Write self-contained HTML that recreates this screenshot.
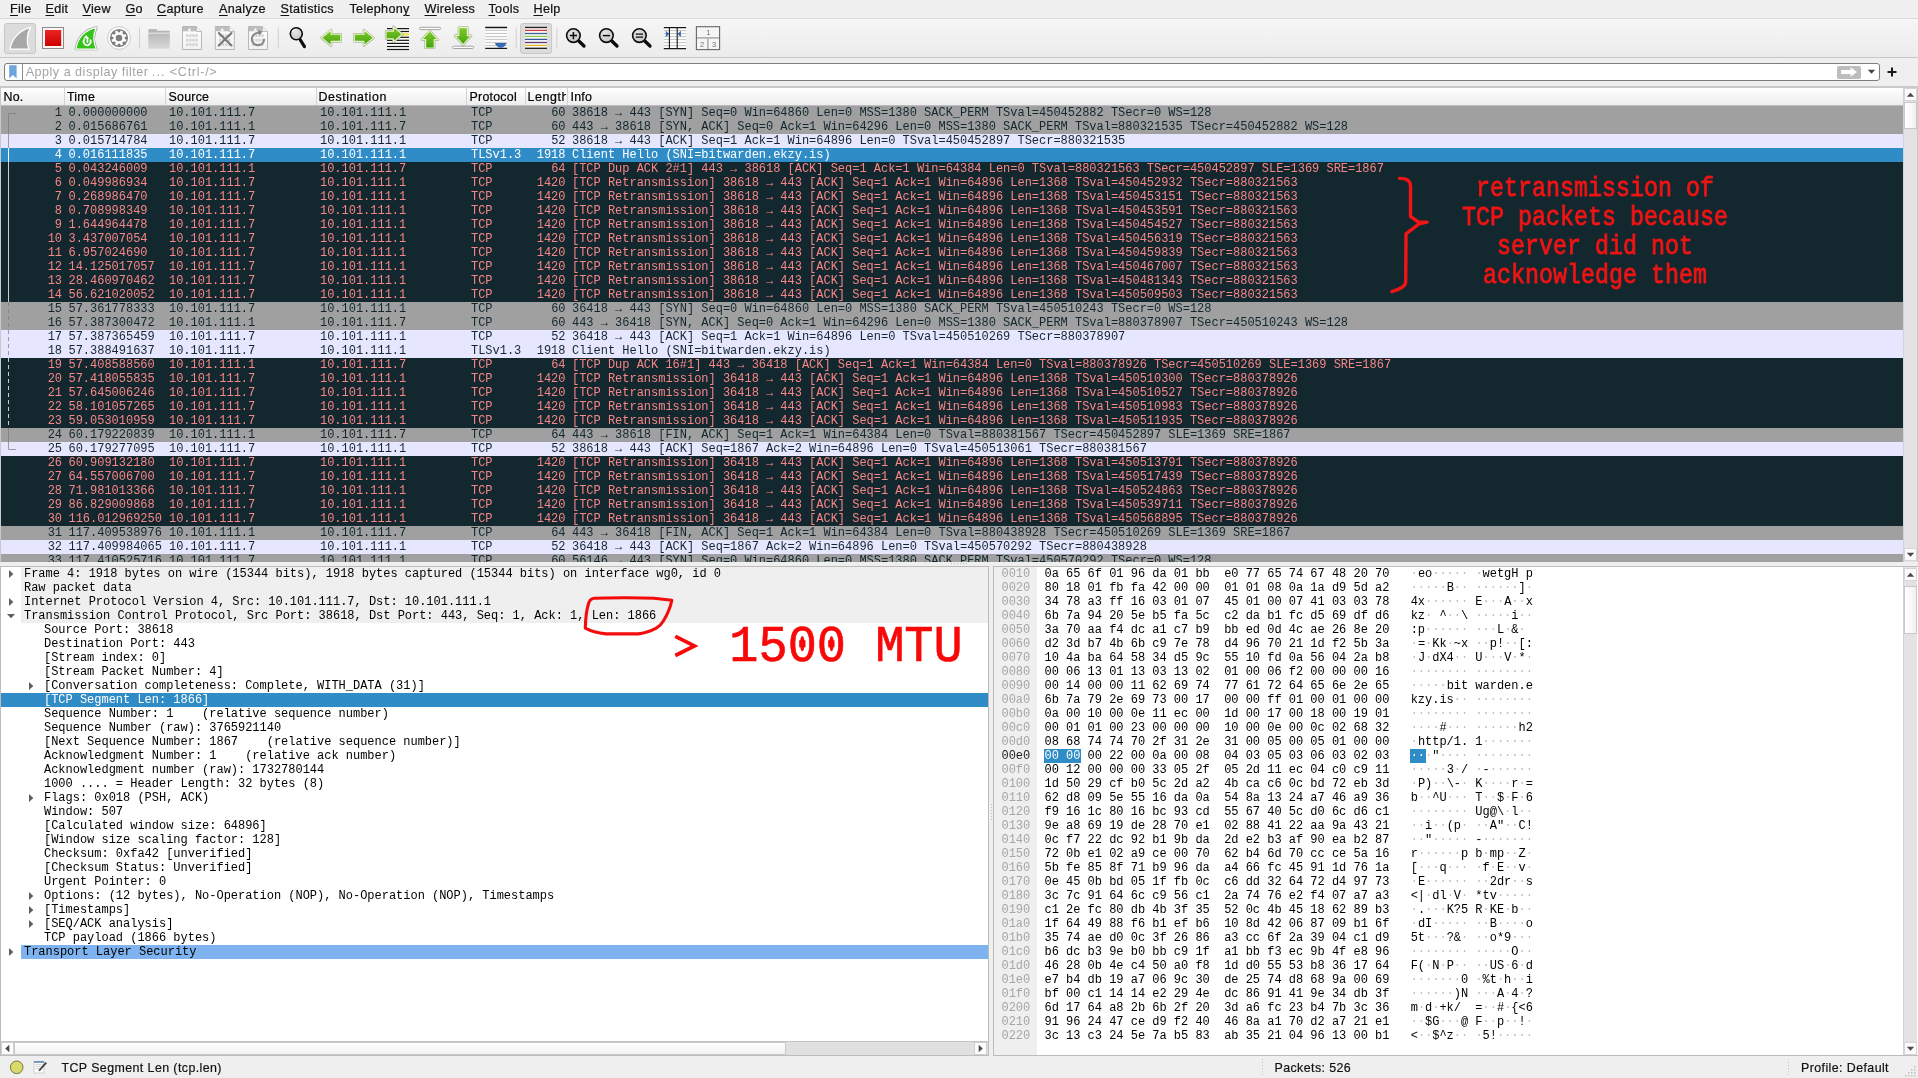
<!DOCTYPE html><html><head><meta charset="utf-8"><title>Wireshark</title><style>
html,body{margin:0;padding:0}
body{width:1918px;height:1078px;position:relative;overflow:hidden;background:#efefef;font-family:"Liberation Sans",sans-serif;font-size:12px;color:#000}
.a{position:absolute}
.m{-webkit-text-stroke:.22px #111;position:absolute;top:1px;height:18px;line-height:17px;font-size:12.6px;color:#111;white-space:pre}
.m u{text-decoration-thickness:1.2px;text-underline-offset:1.8px}
.mono{font-family:"Liberation Mono",monospace;font-size:12px;line-height:14px;white-space:pre;letter-spacing:-.016px}
.r{position:absolute;left:1px;width:1902px;height:14px;overflow:hidden}
.r i{position:absolute;top:0;font-style:normal}
.g{background:#a0a0a0;color:#12272e}
.l{background:#e7e6ff;color:#12272e}
.d{background:#12272e;color:#f78787}
.s{background:#308cc6;color:#fff}
.h{-webkit-text-stroke:.2px #000;position:absolute;top:88px;height:17px;line-height:19px;font-size:12.4px;white-space:pre;letter-spacing:.25px;overflow:hidden}
.hs{position:absolute;top:88px;height:17px;width:1px;background:#d4d4d4}
.t{position:absolute;height:14px}
.t b{font-weight:normal;color:#bcbcbc}
.sb{position:absolute;background:#e3e3e3;border-left:1px solid #d2d2d2;box-sizing:border-box}
.btn{position:absolute;background:#fcfcfc;border:1px solid #c8c8c8;box-sizing:border-box}
.ann{position:absolute;color:#f21212;font-family:"Liberation Mono",monospace;white-space:pre}
</style></head><body><div id="root" style="position:absolute;left:0;top:0;width:1918px;height:1078px;will-change:transform;transform:translateZ(0)"><div class="a" style="left:0;top:0;width:1918px;height:18px;background:#f0f0f0"></div><span class="m" id="m_File" style="left:10px;letter-spacing:0.3px"><u>F</u>ile</span><span class="m" id="m_Edit" style="left:45.5px;letter-spacing:0.3px"><u>E</u>dit</span><span class="m" id="m_View" style="left:82.5px;letter-spacing:0.3px"><u>V</u>iew</span><span class="m" id="m_Go" style="left:125.5px;letter-spacing:0.3px"><u>G</u>o</span><span class="m" id="m_Capture" style="left:157px;letter-spacing:0.3px"><u>C</u>apture</span><span class="m" id="m_Analyze" style="left:219px;letter-spacing:0.3px"><u>A</u>nalyze</span><span class="m" id="m_Statistics" style="left:280.5px;letter-spacing:0.3px"><u>S</u>tatistics</span><span class="m" id="m_Telephony" style="left:349.5px;letter-spacing:0.3px">Telephon<u>y</u></span><span class="m" id="m_Wireless" style="left:424.5px;letter-spacing:0.3px"><u>W</u>ireless</span><span class="m" id="m_Tools" style="left:488.5px;letter-spacing:0.3px"><u>T</u>ools</span><span class="m" id="m_Help" style="left:533.5px;letter-spacing:0.3px"><u>H</u>elp</span><div class="a" style="left:0;top:18px;width:1918px;height:40px;background:linear-gradient(#f6f6f6,#ececec);border-top:1px solid #d9d9d9;border-bottom:1px solid #c6c6c6;box-sizing:border-box"></div><svg class="a" style="left:0;top:0" width="740" height="60" viewBox="0 0 740 60"><defs><linearGradient id="gg" x1="0" y1="0" x2="0" y2="1"><stop offset="0" stop-color="#7fcc2c"/><stop offset="1" stop-color="#46a010"/></linearGradient><linearGradient id="rg" x1="0" y1="0" x2="0" y2="1"><stop offset="0" stop-color="#e82525"/><stop offset="1" stop-color="#cf0000"/></linearGradient><linearGradient id="fg" x1="0" y1="0" x2="0" y2="1"><stop offset="0" stop-color="#b4b4b4"/><stop offset="1" stop-color="#d9d9d9"/></linearGradient><linearGradient id="pg" x1="0" y1="0" x2="0" y2="1"><stop offset="0" stop-color="#ffffff"/><stop offset="1" stop-color="#f1f1f1"/></linearGradient><radialGradient id="mg" cx=".4" cy=".35" r=".7"><stop offset="0" stop-color="#e6e6e6"/><stop offset="1" stop-color="#c2c2c2"/></radialGradient></defs><rect x="4.5" y="23.5" width="31" height="30" rx="2.500" fill="#dcdcdc" stroke="#c6c6c6"/><path d="M10 49.100C11.5 39.500 18.5 30.600 30.4 27.400C27.2 33.800 26.2 41.500 28.9 49.100Z" fill="#a8a8a8" stroke="#fff" stroke-width="1.300" stroke-linejoin="round"/><rect x="42.500" y="27.500" width="21" height="21" fill="#fff4f2" stroke="#8c8c8c"/><rect x="45" y="30" width="16.200" height="16" fill="url(#rg)"/><path d="M75.900 49.100C77.400 38.500 84.300 29.800 96.300 27.600C93.400 33.800 92.600 41.500 96.400 49.100Z" fill="none" stroke="#9c9c9c" stroke-width="2.500" stroke-linejoin="round"/><path d="M75.900 49.100C77.400 38.500 84.300 29.800 96.300 27.600C93.400 33.800 92.600 41.500 96.400 49.100Z" fill="#32c418" stroke="#fff" stroke-width="1.200" stroke-linejoin="round"/><path d="M84.600 39.200A3.500 3.500 0 1 0 90 39.600" fill="none" stroke="#fff" stroke-width="1.700"/><path d="M87.400 42.800V38" stroke="#fff" stroke-width="1.700"/><path d="M83.300 38.300L86.200 35 89.300 38.800z" fill="#fff"/><circle cx="119" cy="38" r="11.400" fill="#fff" stroke="#c4c4c4" stroke-width=".9"/><circle cx="119" cy="38" r="9.100" fill="#7e7e7e"/><g fill="#fff"><circle cx="119" cy="38" r="5.700"/><rect x="117.700" y="30.400" width="2.600" height="3" transform="rotate(22.5 119 38)"/><rect x="117.700" y="30.400" width="2.600" height="3" transform="rotate(67.5 119 38)"/><rect x="117.700" y="30.400" width="2.600" height="3" transform="rotate(112.5 119 38)"/><rect x="117.700" y="30.400" width="2.600" height="3" transform="rotate(157.5 119 38)"/><rect x="117.700" y="30.400" width="2.600" height="3" transform="rotate(202.5 119 38)"/><rect x="117.700" y="30.400" width="2.600" height="3" transform="rotate(247.5 119 38)"/><rect x="117.700" y="30.400" width="2.600" height="3" transform="rotate(292.5 119 38)"/><rect x="117.700" y="30.400" width="2.600" height="3" transform="rotate(337.5 119 38)"/></g><circle cx="119" cy="38" r="3.300" fill="#7e7e7e"/><path d="M139.5 27.500V48.500" stroke="#d0d0d0" stroke-width="1"/><path d="M148.500 31V29.800Q148.500 29 149.300 29H156.500L157.500 31z" fill="#b9b9b9"/><rect x="148.300" y="30.800" width="21.500" height="18" rx=".8" fill="url(#fg)"/><path d="M148.300 33.200H169.800" stroke="#ededed" stroke-width="1"/><path d="M182.5 26.500H196.5L201.5 31.500V49.500H182.5z" fill="url(#pg)" stroke="#b7b7b7" stroke-width="1"/><path d="M183 27H196.3L196.3 31.300H183z" fill="#bdbdbd"/><path d="M187.5 31.300q.5-2.500 2.500-3.500l1 3.500z" fill="#f4f4f4"/><path d="M196.5 26.500V31.500H201.5" fill="#f4f4f4" stroke="#b7b7b7" stroke-width=".9"/><path d="M186.2 35.6H197.8" stroke="#cfcfcf" stroke-width="2.600" stroke-dasharray="2.100 1"/><path d="M186.2 40.1H197.8" stroke="#cfcfcf" stroke-width="2.600" stroke-dasharray="2.100 1"/><path d="M186.2 44.6H197.8" stroke="#cfcfcf" stroke-width="2.600" stroke-dasharray="2.100 1"/><path d="M215.3 26.500H229.3L234.3 31.500V49.500H215.3z" fill="url(#pg)" stroke="#b7b7b7" stroke-width="1"/><path d="M215.8 27H229.10000000000002L229.10000000000002 31.300H215.8z" fill="#bdbdbd"/><path d="M220.3 31.300q.5-2.500 2.500-3.500l1 3.500z" fill="#f4f4f4"/><path d="M229.3 26.500V31.500H234.3" fill="#f4f4f4" stroke="#b7b7b7" stroke-width=".9"/><path d="M219.0 35.6H230.60000000000002" stroke="#cfcfcf" stroke-width="2.600" stroke-dasharray="2.100 1"/><path d="M219.0 40.1H230.60000000000002" stroke="#cfcfcf" stroke-width="2.600" stroke-dasharray="2.100 1"/><path d="M219.0 44.6H230.60000000000002" stroke="#cfcfcf" stroke-width="2.600" stroke-dasharray="2.100 1"/><path d="M218.800 33L231.500 45.500M231.500 33L218.800 45.500" stroke="#777" stroke-width="2.100" stroke-linecap="round"/><path d="M248.5 26.500H262.5L267.5 31.500V49.500H248.5z" fill="url(#pg)" stroke="#b7b7b7" stroke-width="1"/><path d="M249 27H262.3L262.3 31.300H249z" fill="#bdbdbd"/><path d="M253.5 31.300q.5-2.500 2.500-3.500l1 3.500z" fill="#f4f4f4"/><path d="M262.5 26.500V31.500H267.5" fill="#f4f4f4" stroke="#b7b7b7" stroke-width=".9"/><path d="M252.2 35.6H263.8" stroke="#cfcfcf" stroke-width="2.600" stroke-dasharray="2.100 1"/><path d="M252.2 40.1H263.8" stroke="#cfcfcf" stroke-width="2.600" stroke-dasharray="2.100 1"/><path d="M252.2 44.6H263.8" stroke="#cfcfcf" stroke-width="2.600" stroke-dasharray="2.100 1"/><path d="M260.300 33.300A6.200 6.200 0 1 0 264.200 38.800" fill="none" stroke="#858585" stroke-width="1.900"/><path d="M257.500 30.500L262.500 31.300 259.800 35.600z" fill="#858585"/><path d="M278.3 27.500V48.500" stroke="#d0d0d0" stroke-width="1"/><path d="M300.4 40L304.4 46.5" stroke="#0c0c0c" stroke-width="3.300" stroke-linecap="round"/><circle cx="296.3" cy="33.7" r="6" fill="url(#mg)" stroke="#0c0c0c" stroke-width="1.600"/><path d="M292.300 31.500A4.500 4.500 0 0 1 296 29.300" fill="none" stroke="#fff" stroke-width="1.100" stroke-linecap="round"/><path d="M321.500 37.800L331.200 30V34.200H340.800V41.400H331.200V45.600z" fill="none" stroke="#93a183" stroke-width="2.200" stroke-linejoin="round"/><path d="M321.500 37.800L331.200 30V34.200H340.800V41.400H331.200V45.600z" fill="url(#gg)" stroke="#e6f6c4" stroke-width="1.200" stroke-linejoin="round"/><path d="M373.600 37.800L363.900 30V34.200H354.300V41.400H363.900V45.600z" fill="none" stroke="#93a183" stroke-width="2.200" stroke-linejoin="round"/><path d="M373.600 37.800L363.900 30V34.200H354.300V41.400H363.900V45.600z" fill="url(#gg)" stroke="#e6f6c4" stroke-width="1.200" stroke-linejoin="round"/><rect x="387" y="27.600" width="22" height="23" fill="#fff"/><path d="M387 28.6H409" stroke="#161616" stroke-width="1.250"/><path d="M387 31.5H409" stroke="#161616" stroke-width="1.250"/><path d="M387 37.3H409" stroke="#161616" stroke-width="1.250"/><path d="M387 40.3H409" stroke="#161616" stroke-width="1.250"/><path d="M387 43.4H409" stroke="#161616" stroke-width="1.250"/><path d="M387 46.5H409" stroke="#161616" stroke-width="1.250"/><path d="M387 49.5H409" stroke="#161616" stroke-width="1.250"/><rect x="401" y="33.200" width="8" height="2.400" fill="#f2e24a"/><path d="M402.300 34.300L393.400 26.700V31.200H386V38.800H393.400V42z" fill="none" stroke="#93a183" stroke-width="2.200" stroke-linejoin="round"/><path d="M402.300 34.300L393.400 26.700V31.200H386V38.800H393.400V42z" fill="url(#gg)" stroke="#e6f6c4" stroke-width="1.200" stroke-linejoin="round"/><rect x="419.400" y="27.300" width="21.100" height="2.300" rx="1.150" fill="#fff" stroke="#8d8d8d" stroke-width=".8"/><path d="M429.900 30.900L438 39.700H434.200V48H425.600V39.700H421.800z" fill="none" stroke="#93a183" stroke-width="2.200" stroke-linejoin="round"/><path d="M429.900 30.900L438 39.700H434.200V48H425.600V39.700H421.800z" fill="url(#gg)" stroke="#e6f6c4" stroke-width="1.200" stroke-linejoin="round"/><path d="M463.100 44.800L471.200 35.700H467.400V27.700H458.800V35.700H455z" fill="none" stroke="#93a183" stroke-width="2.200" stroke-linejoin="round"/><path d="M463.100 44.800L471.200 35.700H467.400V27.700H458.800V35.700H455z" fill="url(#gg)" stroke="#e6f6c4" stroke-width="1.200" stroke-linejoin="round"/><rect x="452.500" y="46.200" width="21.100" height="2.300" rx="1.150" fill="#fff" stroke="#8d8d8d" stroke-width=".8"/><rect x="485.200" y="27" width="21.900" height="22" fill="#fff"/><path d="M485.200 30.4H507.100" stroke="#c9c9c9" stroke-width="1.200"/><path d="M485.200 33.5H507.100" stroke="#c9c9c9" stroke-width="1.200"/><path d="M485.200 36.6H507.100" stroke="#c9c9c9" stroke-width="1.200"/><path d="M485.200 39.5H507.100" stroke="#c9c9c9" stroke-width="1.200"/><path d="M485.200 42.5H507.100" stroke="#c9c9c9" stroke-width="1.200"/><path d="M485.200 45.6H507.100" stroke="#c9c9c9" stroke-width="1.200"/><path d="M485.200 27.500H507.100M485.200 48.400H507.100" stroke="#161616" stroke-width="1.300"/><path d="M494.800 43H506.600C505.600 45.600 503.600 47.800 500.700 47.800C497.800 47.800 495.800 45.600 494.800 43Z" fill="#3a69b4"/><path d="M516.2 27.500V48.500" stroke="#d0d0d0" stroke-width="1"/><rect x="520.6" y="23.5" width="31" height="30" rx="2.500" fill="#dcdcdc" stroke="#c6c6c6"/><rect x="525" y="27" width="22" height="22" fill="#fff"/><path d="M525 27.5H547" stroke="#222" stroke-width="1.350"/><path d="M525 30.4H547" stroke="#d83838" stroke-width="1.350"/><path d="M525 33.5H547" stroke="#3b5f97" stroke-width="1.350"/><path d="M525 36.4H547" stroke="#8cc544" stroke-width="1.350"/><path d="M525 39.4H547" stroke="#34559b" stroke-width="1.350"/><path d="M525 42.5H547" stroke="#5a3776" stroke-width="1.350"/><path d="M525 45.4H547" stroke="#e2b521" stroke-width="1.350"/><path d="M525 48.3H547" stroke="#222" stroke-width="1.350"/><path d="M556.9 27.500V48.500" stroke="#d0d0d0" stroke-width="1"/><path d="M578.8 41L584 46" stroke="#0c0c0c" stroke-width="3.300" stroke-linecap="round"/><circle cx="573.4" cy="35.6" r="6.8" fill="url(#mg)" stroke="#0c0c0c" stroke-width="1.600"/><path d="M569.8 35.6H577.0M573.4 32.0V39.2" stroke="#0c0c0c" stroke-width="1.500"/><path d="M611.8 41L617 46" stroke="#0c0c0c" stroke-width="3.300" stroke-linecap="round"/><circle cx="606.4" cy="35.6" r="6.8" fill="url(#mg)" stroke="#0c0c0c" stroke-width="1.600"/><path d="M602.8 35.6H610.0" stroke="#0c0c0c" stroke-width="1.500"/><path d="M644.8 41L650 46" stroke="#0c0c0c" stroke-width="3.300" stroke-linecap="round"/><circle cx="639.4" cy="35.6" r="6.8" fill="url(#mg)" stroke="#0c0c0c" stroke-width="1.600"/><path d="M635.8 34.1H643.0M635.8 37.1H643.0" stroke="#0c0c0c" stroke-width="1.400"/><rect x="663.800" y="27" width="22.300" height="22" fill="#fff"/><path d="M663.800 30.6H686.100" stroke="#c6c6c6" stroke-width="1.100"/><path d="M663.800 33.6H686.100" stroke="#c6c6c6" stroke-width="1.100"/><path d="M663.800 36.6H686.100" stroke="#c6c6c6" stroke-width="1.100"/><path d="M663.800 39.6H686.100" stroke="#c6c6c6" stroke-width="1.100"/><path d="M663.800 42.6H686.100" stroke="#c6c6c6" stroke-width="1.100"/><path d="M663.800 45.6H686.100" stroke="#c6c6c6" stroke-width="1.100"/><path d="M663.800 27.600H686.100M663.800 48.600H686.100" stroke="#161616" stroke-width="1.300"/><path d="M669.400 27.600V48.600M677.200 27.600V48.600" stroke="#161616" stroke-width="1.100"/><path d="M665.800 30.800V37L669.300 33.900zM680.900 30.800V37L677.400 33.900z" fill="#3a69b4"/><rect x="696.400" y="26.700" width="23.200" height="22.900" fill="#f5f5f5" stroke="#666" stroke-width="1.100"/><path d="M697 37.900H719" stroke="#a8a8a8" stroke-width="1.500"/><path d="M707.900 38.500V49" stroke="#a8a8a8" stroke-width="1.500"/><g font-family="Liberation Sans,sans-serif" font-size="7.500" fill="#6f6f6f" text-anchor="middle"><text x="708.300" y="35.300">1</text><text x="702.200" y="46.900">2</text><text x="714" y="46.900">3</text></g></svg><div class="a" style="left:0;top:58px;width:1918px;height:28px;background:#efefef"></div><div class="a" style="left:4px;top:63px;width:1876px;height:18px;box-sizing:border-box;border:1px solid #7d7d7d;border-radius:3px;background:#fff"></div><div class="a" style="left:22px;top:64px;width:1px;height:16px;background:#8a8a8a"></div><svg class="a" style="left:8px;top:64px" width="10" height="16" viewBox="0 0 10 16"><path d="M1.2 1.3h7.4v13.2l-3.7-3.4-3.7 3.4z" fill="#6da4dc"/></svg><span class="a" id="flt" style="left:25.7px;top:64px;height:18px;line-height:17px;font-size:12.6px;color:#a4a4a4;white-space:pre;letter-spacing:.49px">Apply a display filter</span><span class="a" style="left:151.7px;top:64px;height:18px;line-height:17px;font-size:12.6px;color:#a4a4a4;white-space:pre;letter-spacing:1.2px">...</span><span class="a" id="flt2" style="left:169.8px;top:64px;height:18px;line-height:17px;font-size:12.6px;color:#a4a4a4;white-space:pre;letter-spacing:.7px">&lt;Ctrl-/&gt;</span><div class="a" style="left:1837px;top:65.5px;width:24px;height:13px;background:#bdbdbd;border-radius:2px"></div><svg class="a" style="left:1837px;top:65px" width="24" height="14" viewBox="0 0 24 14"><path d="M4 5h9.5V2.2L20 7l-6.500 4.800V9H4z" fill="#fff"/></svg><svg class="a" style="left:1866px;top:68px" width="12" height="8" viewBox="0 0 12 8"><path d="M1.8 1.8h7.4L5.500 5.800z" fill="#444"/></svg><svg class="a" style="left:1886px;top:66px" width="12" height="12" viewBox="0 0 12 12"><path d="M5 1.500h2V5h3.500v2H7v3.500H5V7H1.500V5H5z" fill="#1a1a1a"/></svg><div class="a" style="left:0;top:86px;width:1918px;height:476px;background:#c9c9c9"></div><div class="a" style="left:1px;top:88px;width:1902px;height:18px;background:linear-gradient(#ffffff,#f3f3f3 60%,#ececec)"></div><span class="h" style="left:3.5px;width:61.0px">No.</span><span class="h" style="left:67px;width:98.5px">Time</span><span class="h" style="left:168.5px;width:147.5px">Source</span><span class="h" style="left:318.5px;width:148.0px;letter-spacing:.58px">Destination</span><span class="h" style="left:469.5px;width:55.5px">Protocol</span><span class="h" style="left:527.5px;width:38.5px;letter-spacing:.58px">Length</span><span class="h" style="left:570.5px;width:1332.5px">Info</span><div class="hs" style="left:64px"></div><div class="hs" style="left:165px"></div><div class="hs" style="left:316px"></div><div class="hs" style="left:466px"></div><div class="hs" style="left:524.5px"></div><div class="hs" style="left:567px"></div><div class="a" style="left:1px;top:105px;width:1902px;height:1px;background:#bcbcbc"></div><div class="a mono" style="left:0;top:0;width:1903px;height:561.5px;overflow:hidden"><div class="r g" style="top:106px"><i style="right:1841px">1</i><i style="left:67.5px">0.000000000</i><i style="left:168px">10.101.111.7</i><i style="left:319px">10.101.111.1</i><i style="left:470px">TCP</i><i style="right:1337.5px">60</i><i style="left:571px">38618 → 443 [SYN] Seq=0 Win=64860 Len=0 MSS=1380 SACK_PERM TSval=450452882 TSecr=0 WS=128</i></div><div class="r g" style="top:120px"><i style="right:1841px">2</i><i style="left:67.5px">0.015686761</i><i style="left:168px">10.101.111.1</i><i style="left:319px">10.101.111.7</i><i style="left:470px">TCP</i><i style="right:1337.5px">60</i><i style="left:571px">443 → 38618 [SYN, ACK] Seq=0 Ack=1 Win=64296 Len=0 MSS=1380 SACK_PERM TSval=880321535 TSecr=450452882 WS=128</i></div><div class="r l" style="top:134px"><i style="right:1841px">3</i><i style="left:67.5px">0.015714784</i><i style="left:168px">10.101.111.7</i><i style="left:319px">10.101.111.1</i><i style="left:470px">TCP</i><i style="right:1337.5px">52</i><i style="left:571px">38618 → 443 [ACK] Seq=1 Ack=1 Win=64896 Len=0 TSval=450452897 TSecr=880321535</i></div><div class="r s" style="top:148px"><i style="right:1841px">4</i><i style="left:67.5px">0.016111835</i><i style="left:168px">10.101.111.7</i><i style="left:319px">10.101.111.1</i><i style="left:470px">TLSv1.3</i><i style="right:1337.5px">1918</i><i style="left:571px">Client Hello (SNI=bitwarden.ekzy.is)</i></div><div class="r d" style="top:162px"><i style="right:1841px">5</i><i style="left:67.5px">0.043246009</i><i style="left:168px">10.101.111.1</i><i style="left:319px">10.101.111.7</i><i style="left:470px">TCP</i><i style="right:1337.5px">64</i><i style="left:571px">[TCP Dup ACK 2#1] 443 → 38618 [ACK] Seq=1 Ack=1 Win=64384 Len=0 TSval=880321563 TSecr=450452897 SLE=1369 SRE=1867</i></div><div class="r d" style="top:176px"><i style="right:1841px">6</i><i style="left:67.5px">0.049986934</i><i style="left:168px">10.101.111.7</i><i style="left:319px">10.101.111.1</i><i style="left:470px">TCP</i><i style="right:1337.5px">1420</i><i style="left:571px">[TCP Retransmission] 38618 → 443 [ACK] Seq=1 Ack=1 Win=64896 Len=1368 TSval=450452932 TSecr=880321563</i></div><div class="r d" style="top:190px"><i style="right:1841px">7</i><i style="left:67.5px">0.268986470</i><i style="left:168px">10.101.111.7</i><i style="left:319px">10.101.111.1</i><i style="left:470px">TCP</i><i style="right:1337.5px">1420</i><i style="left:571px">[TCP Retransmission] 38618 → 443 [ACK] Seq=1 Ack=1 Win=64896 Len=1368 TSval=450453151 TSecr=880321563</i></div><div class="r d" style="top:204px"><i style="right:1841px">8</i><i style="left:67.5px">0.708998349</i><i style="left:168px">10.101.111.7</i><i style="left:319px">10.101.111.1</i><i style="left:470px">TCP</i><i style="right:1337.5px">1420</i><i style="left:571px">[TCP Retransmission] 38618 → 443 [ACK] Seq=1 Ack=1 Win=64896 Len=1368 TSval=450453591 TSecr=880321563</i></div><div class="r d" style="top:218px"><i style="right:1841px">9</i><i style="left:67.5px">1.644964478</i><i style="left:168px">10.101.111.7</i><i style="left:319px">10.101.111.1</i><i style="left:470px">TCP</i><i style="right:1337.5px">1420</i><i style="left:571px">[TCP Retransmission] 38618 → 443 [ACK] Seq=1 Ack=1 Win=64896 Len=1368 TSval=450454527 TSecr=880321563</i></div><div class="r d" style="top:232px"><i style="right:1841px">10</i><i style="left:67.5px">3.437007054</i><i style="left:168px">10.101.111.7</i><i style="left:319px">10.101.111.1</i><i style="left:470px">TCP</i><i style="right:1337.5px">1420</i><i style="left:571px">[TCP Retransmission] 38618 → 443 [ACK] Seq=1 Ack=1 Win=64896 Len=1368 TSval=450456319 TSecr=880321563</i></div><div class="r d" style="top:246px"><i style="right:1841px">11</i><i style="left:67.5px">6.957024690</i><i style="left:168px">10.101.111.7</i><i style="left:319px">10.101.111.1</i><i style="left:470px">TCP</i><i style="right:1337.5px">1420</i><i style="left:571px">[TCP Retransmission] 38618 → 443 [ACK] Seq=1 Ack=1 Win=64896 Len=1368 TSval=450459839 TSecr=880321563</i></div><div class="r d" style="top:260px"><i style="right:1841px">12</i><i style="left:67.5px">14.125017057</i><i style="left:168px">10.101.111.7</i><i style="left:319px">10.101.111.1</i><i style="left:470px">TCP</i><i style="right:1337.5px">1420</i><i style="left:571px">[TCP Retransmission] 38618 → 443 [ACK] Seq=1 Ack=1 Win=64896 Len=1368 TSval=450467007 TSecr=880321563</i></div><div class="r d" style="top:274px"><i style="right:1841px">13</i><i style="left:67.5px">28.460970462</i><i style="left:168px">10.101.111.7</i><i style="left:319px">10.101.111.1</i><i style="left:470px">TCP</i><i style="right:1337.5px">1420</i><i style="left:571px">[TCP Retransmission] 38618 → 443 [ACK] Seq=1 Ack=1 Win=64896 Len=1368 TSval=450481343 TSecr=880321563</i></div><div class="r d" style="top:288px"><i style="right:1841px">14</i><i style="left:67.5px">56.621020052</i><i style="left:168px">10.101.111.7</i><i style="left:319px">10.101.111.1</i><i style="left:470px">TCP</i><i style="right:1337.5px">1420</i><i style="left:571px">[TCP Retransmission] 38618 → 443 [ACK] Seq=1 Ack=1 Win=64896 Len=1368 TSval=450509503 TSecr=880321563</i></div><div class="r g" style="top:302px"><i style="right:1841px">15</i><i style="left:67.5px">57.361778333</i><i style="left:168px">10.101.111.7</i><i style="left:319px">10.101.111.1</i><i style="left:470px">TCP</i><i style="right:1337.5px">60</i><i style="left:571px">36418 → 443 [SYN] Seq=0 Win=64860 Len=0 MSS=1380 SACK_PERM TSval=450510243 TSecr=0 WS=128</i></div><div class="r g" style="top:316px"><i style="right:1841px">16</i><i style="left:67.5px">57.387300472</i><i style="left:168px">10.101.111.1</i><i style="left:319px">10.101.111.7</i><i style="left:470px">TCP</i><i style="right:1337.5px">60</i><i style="left:571px">443 → 36418 [SYN, ACK] Seq=0 Ack=1 Win=64296 Len=0 MSS=1380 SACK_PERM TSval=880378907 TSecr=450510243 WS=128</i></div><div class="r l" style="top:330px"><i style="right:1841px">17</i><i style="left:67.5px">57.387365459</i><i style="left:168px">10.101.111.7</i><i style="left:319px">10.101.111.1</i><i style="left:470px">TCP</i><i style="right:1337.5px">52</i><i style="left:571px">36418 → 443 [ACK] Seq=1 Ack=1 Win=64896 Len=0 TSval=450510269 TSecr=880378907</i></div><div class="r l" style="top:344px"><i style="right:1841px">18</i><i style="left:67.5px">57.388491637</i><i style="left:168px">10.101.111.7</i><i style="left:319px">10.101.111.1</i><i style="left:470px">TLSv1.3</i><i style="right:1337.5px">1918</i><i style="left:571px">Client Hello (SNI=bitwarden.ekzy.is)</i></div><div class="r d" style="top:358px"><i style="right:1841px">19</i><i style="left:67.5px">57.408588560</i><i style="left:168px">10.101.111.1</i><i style="left:319px">10.101.111.7</i><i style="left:470px">TCP</i><i style="right:1337.5px">64</i><i style="left:571px">[TCP Dup ACK 16#1] 443 → 36418 [ACK] Seq=1 Ack=1 Win=64384 Len=0 TSval=880378926 TSecr=450510269 SLE=1369 SRE=1867</i></div><div class="r d" style="top:372px"><i style="right:1841px">20</i><i style="left:67.5px">57.418055835</i><i style="left:168px">10.101.111.7</i><i style="left:319px">10.101.111.1</i><i style="left:470px">TCP</i><i style="right:1337.5px">1420</i><i style="left:571px">[TCP Retransmission] 36418 → 443 [ACK] Seq=1 Ack=1 Win=64896 Len=1368 TSval=450510300 TSecr=880378926</i></div><div class="r d" style="top:386px"><i style="right:1841px">21</i><i style="left:67.5px">57.645006246</i><i style="left:168px">10.101.111.7</i><i style="left:319px">10.101.111.1</i><i style="left:470px">TCP</i><i style="right:1337.5px">1420</i><i style="left:571px">[TCP Retransmission] 36418 → 443 [ACK] Seq=1 Ack=1 Win=64896 Len=1368 TSval=450510527 TSecr=880378926</i></div><div class="r d" style="top:400px"><i style="right:1841px">22</i><i style="left:67.5px">58.101057265</i><i style="left:168px">10.101.111.7</i><i style="left:319px">10.101.111.1</i><i style="left:470px">TCP</i><i style="right:1337.5px">1420</i><i style="left:571px">[TCP Retransmission] 36418 → 443 [ACK] Seq=1 Ack=1 Win=64896 Len=1368 TSval=450510983 TSecr=880378926</i></div><div class="r d" style="top:414px"><i style="right:1841px">23</i><i style="left:67.5px">59.053010959</i><i style="left:168px">10.101.111.7</i><i style="left:319px">10.101.111.1</i><i style="left:470px">TCP</i><i style="right:1337.5px">1420</i><i style="left:571px">[TCP Retransmission] 36418 → 443 [ACK] Seq=1 Ack=1 Win=64896 Len=1368 TSval=450511935 TSecr=880378926</i></div><div class="r g" style="top:428px"><i style="right:1841px">24</i><i style="left:67.5px">60.179220839</i><i style="left:168px">10.101.111.1</i><i style="left:319px">10.101.111.7</i><i style="left:470px">TCP</i><i style="right:1337.5px">64</i><i style="left:571px">443 → 38618 [FIN, ACK] Seq=1 Ack=1 Win=64384 Len=0 TSval=880381567 TSecr=450452897 SLE=1369 SRE=1867</i></div><div class="r l" style="top:442px"><i style="right:1841px">25</i><i style="left:67.5px">60.179277095</i><i style="left:168px">10.101.111.7</i><i style="left:319px">10.101.111.1</i><i style="left:470px">TCP</i><i style="right:1337.5px">52</i><i style="left:571px">38618 → 443 [ACK] Seq=1867 Ack=2 Win=64896 Len=0 TSval=450513061 TSecr=880381567</i></div><div class="r d" style="top:456px"><i style="right:1841px">26</i><i style="left:67.5px">60.909132180</i><i style="left:168px">10.101.111.7</i><i style="left:319px">10.101.111.1</i><i style="left:470px">TCP</i><i style="right:1337.5px">1420</i><i style="left:571px">[TCP Retransmission] 36418 → 443 [ACK] Seq=1 Ack=1 Win=64896 Len=1368 TSval=450513791 TSecr=880378926</i></div><div class="r d" style="top:470px"><i style="right:1841px">27</i><i style="left:67.5px">64.557006700</i><i style="left:168px">10.101.111.7</i><i style="left:319px">10.101.111.1</i><i style="left:470px">TCP</i><i style="right:1337.5px">1420</i><i style="left:571px">[TCP Retransmission] 36418 → 443 [ACK] Seq=1 Ack=1 Win=64896 Len=1368 TSval=450517439 TSecr=880378926</i></div><div class="r d" style="top:484px"><i style="right:1841px">28</i><i style="left:67.5px">71.981013366</i><i style="left:168px">10.101.111.7</i><i style="left:319px">10.101.111.1</i><i style="left:470px">TCP</i><i style="right:1337.5px">1420</i><i style="left:571px">[TCP Retransmission] 36418 → 443 [ACK] Seq=1 Ack=1 Win=64896 Len=1368 TSval=450524863 TSecr=880378926</i></div><div class="r d" style="top:498px"><i style="right:1841px">29</i><i style="left:67.5px">86.829009868</i><i style="left:168px">10.101.111.7</i><i style="left:319px">10.101.111.1</i><i style="left:470px">TCP</i><i style="right:1337.5px">1420</i><i style="left:571px">[TCP Retransmission] 36418 → 443 [ACK] Seq=1 Ack=1 Win=64896 Len=1368 TSval=450539711 TSecr=880378926</i></div><div class="r d" style="top:512px"><i style="right:1841px">30</i><i style="left:67.5px">116.012969250</i><i style="left:168px">10.101.111.7</i><i style="left:319px">10.101.111.1</i><i style="left:470px">TCP</i><i style="right:1337.5px">1420</i><i style="left:571px">[TCP Retransmission] 36418 → 443 [ACK] Seq=1 Ack=1 Win=64896 Len=1368 TSval=450568895 TSecr=880378926</i></div><div class="r g" style="top:526px"><i style="right:1841px">31</i><i style="left:67.5px">117.409538976</i><i style="left:168px">10.101.111.1</i><i style="left:319px">10.101.111.7</i><i style="left:470px">TCP</i><i style="right:1337.5px">64</i><i style="left:571px">443 → 36418 [FIN, ACK] Seq=1 Ack=1 Win=64384 Len=0 TSval=880438928 TSecr=450510269 SLE=1369 SRE=1867</i></div><div class="r l" style="top:540px"><i style="right:1841px">32</i><i style="left:67.5px">117.409984065</i><i style="left:168px">10.101.111.7</i><i style="left:319px">10.101.111.1</i><i style="left:470px">TCP</i><i style="right:1337.5px">52</i><i style="left:571px">36418 → 443 [ACK] Seq=1867 Ack=2 Win=64896 Len=0 TSval=450570292 TSecr=880438928</i></div><div class="r g" style="top:554px"><i style="right:1841px">33</i><i style="left:67.5px">117.410525716</i><i style="left:168px">10.101.111.7</i><i style="left:319px">10.101.111.1</i><i style="left:470px">TCP</i><i style="right:1337.5px">60</i><i style="left:571px">56146 → 443 [SYN] Seq=0 Win=64860 Len=0 MSS=1380 SACK_PERM TSval=450570292 TSecr=0 WS=128</i></div></div><svg class="a" style="left:0;top:0" width="20" height="562" viewBox="0 0 20 562"><path d="M8.5 120V113.5H16" stroke="#82878a" fill="none"/><path d="M8.5 120V134" stroke="#82878a" fill="none"/><path d="M8.5 134V148" stroke="#9a9ba8" fill="none"/><path d="M8.5 148V162" stroke="#ffffff" fill="none"/><path d="M8.5 162V176" stroke="#cfcbd3" fill="none"/><path d="M8.5 176V190" stroke="#cfcbd3" fill="none"/><path d="M8.5 190V204" stroke="#cfcbd3" fill="none"/><path d="M8.5 204V218" stroke="#cfcbd3" fill="none"/><path d="M8.5 218V232" stroke="#cfcbd3" fill="none"/><path d="M8.5 232V246" stroke="#cfcbd3" fill="none"/><path d="M8.5 246V260" stroke="#cfcbd3" fill="none"/><path d="M8.5 260V274" stroke="#cfcbd3" fill="none"/><path d="M8.5 274V288" stroke="#cfcbd3" fill="none"/><path d="M8.5 288V302" stroke="#cfcbd3" fill="none"/><path d="M8.5 302V316" stroke="#82878a" stroke-dasharray="4 3" stroke-dashoffset="0" fill="none"/><path d="M8.5 316V330" stroke="#82878a" stroke-dasharray="4 3" stroke-dashoffset="0" fill="none"/><path d="M8.5 330V344" stroke="#9a9ba8" stroke-dasharray="4 3" stroke-dashoffset="0" fill="none"/><path d="M8.5 344V358" stroke="#9a9ba8" stroke-dasharray="4 3" stroke-dashoffset="0" fill="none"/><path d="M8.5 358V372" stroke="#cfcbd3" stroke-dasharray="4 3" stroke-dashoffset="0" fill="none"/><path d="M8.5 372V386" stroke="#cfcbd3" stroke-dasharray="4 3" stroke-dashoffset="0" fill="none"/><path d="M8.5 386V400" stroke="#cfcbd3" stroke-dasharray="4 3" stroke-dashoffset="0" fill="none"/><path d="M8.5 400V414" stroke="#cfcbd3" stroke-dasharray="4 3" stroke-dashoffset="0" fill="none"/><path d="M8.5 414V428" stroke="#cfcbd3" stroke-dasharray="4 3" stroke-dashoffset="0" fill="none"/><path d="M8.5 428V442" stroke="#82878a" fill="none"/><path d="M8.5 442V449.5H16" stroke="#9a9ba8" fill="none"/></svg><div class="sb" style="left:1903px;top:88px;width:14px;height:473.5px"></div><div class="btn" style="left:1904px;top:88px;width:13px;height:13px;border-color:#d6d6d6"></div><svg class="a" style="left:1904px;top:88px" width="13" height="13"><path d="M2.800 8.800L6.500 4.700 10.200 8.800z" fill="#4a4a4a"/></svg><div class="btn" style="left:1904px;top:101.500px;width:13px;height:27px;background:linear-gradient(90deg,#fff,#f1f1f1)"></div><div class="btn" style="left:1904px;top:548px;width:13px;height:13px;border-color:#d6d6d6"></div><svg class="a" style="left:1904px;top:548px" width="13" height="13"><path d="M2.800 4.700L6.500 8.800 10.200 4.700z" fill="#4a4a4a"/></svg><div class="a" style="left:0;top:561.5px;width:1918px;height:5px;background:#efefef"></div><div class="a" style="left:951px;top:563px;width:18px;height:1px;background:repeating-linear-gradient(90deg,#bdbdbd 0 1px,transparent 1px 3px)"></div><div class="a" style="left:0;top:566px;width:989px;height:490px;box-sizing:border-box;border:1px solid #bcbcbc;background:#fff"></div><div class="a mono" style="left:1px;top:567px;width:987px;height:474px;overflow:hidden"><div class="t" style="left:20px;top:0px;width:968px;background:#efefef"></div><span class="t" style="left:23px;top:0px;color:#000">Frame 4: 1918 bytes on wire (15344 bits), 1918 bytes captured (15344 bits) on interface wg0, id 0</span><svg class="a" style="left:6px;top:2px" width="8" height="10"><path d="M2 1L6.300 5 2 9z" fill="#5e5e5e"/></svg><div class="t" style="left:20px;top:14px;width:968px;background:#efefef"></div><span class="t" style="left:23px;top:14px;color:#000">Raw packet data</span><div class="t" style="left:20px;top:28px;width:968px;background:#efefef"></div><span class="t" style="left:23px;top:28px;color:#000">Internet Protocol Version 4, Src: 10.101.111.7, Dst: 10.101.111.1</span><svg class="a" style="left:6px;top:30px" width="8" height="10"><path d="M2 1L6.300 5 2 9z" fill="#5e5e5e"/></svg><div class="t" style="left:20px;top:42px;width:968px;background:#efefef"></div><span class="t" style="left:23px;top:42px;color:#000">Transmission Control Protocol, Src Port: 38618, Dst Port: 443, Seq: 1, Ack: 1, Len: 1866</span><svg class="a" style="left:5px;top:45px" width="10" height="8"><path d="M1 2H9L5 6.300z" fill="#5e5e5e"/></svg><span class="t" style="left:43px;top:56px;color:#000">Source Port: 38618</span><span class="t" style="left:43px;top:70px;color:#000">Destination Port: 443</span><span class="t" style="left:43px;top:84px;color:#000">[Stream index: 0]</span><span class="t" style="left:43px;top:98px;color:#000">[Stream Packet Number: 4]</span><span class="t" style="left:43px;top:112px;color:#000">[Conversation completeness: Complete, WITH_DATA (31)]</span><svg class="a" style="left:25.5px;top:114px" width="8" height="10"><path d="M2 1L6.300 5 2 9z" fill="#5e5e5e"/></svg><div class="t" style="left:0;top:126px;width:988px;background:#308cc6"></div><span class="t" style="left:43px;top:126px;color:#fff">[TCP Segment Len: 1866]</span><span class="t" style="left:43px;top:140px;color:#000">Sequence Number: 1    (relative sequence number)</span><span class="t" style="left:43px;top:154px;color:#000">Sequence Number (raw): 3765921140</span><span class="t" style="left:43px;top:168px;color:#000">[Next Sequence Number: 1867    (relative sequence number)]</span><span class="t" style="left:43px;top:182px;color:#000">Acknowledgment Number: 1    (relative ack number)</span><span class="t" style="left:43px;top:196px;color:#000">Acknowledgment number (raw): 1732780144</span><span class="t" style="left:43px;top:210px;color:#000">1000 .... = Header Length: 32 bytes (8)</span><span class="t" style="left:43px;top:224px;color:#000">Flags: 0x018 (PSH, ACK)</span><svg class="a" style="left:25.5px;top:226px" width="8" height="10"><path d="M2 1L6.300 5 2 9z" fill="#5e5e5e"/></svg><span class="t" style="left:43px;top:238px;color:#000">Window: 507</span><span class="t" style="left:43px;top:252px;color:#000">[Calculated window size: 64896]</span><span class="t" style="left:43px;top:266px;color:#000">[Window size scaling factor: 128]</span><span class="t" style="left:43px;top:280px;color:#000">Checksum: 0xfa42 [unverified]</span><span class="t" style="left:43px;top:294px;color:#000">[Checksum Status: Unverified]</span><span class="t" style="left:43px;top:308px;color:#000">Urgent Pointer: 0</span><span class="t" style="left:43px;top:322px;color:#000">Options: (12 bytes), No-Operation (NOP), No-Operation (NOP), Timestamps</span><svg class="a" style="left:25.5px;top:324px" width="8" height="10"><path d="M2 1L6.300 5 2 9z" fill="#5e5e5e"/></svg><span class="t" style="left:43px;top:336px;color:#000">[Timestamps]</span><svg class="a" style="left:25.5px;top:338px" width="8" height="10"><path d="M2 1L6.300 5 2 9z" fill="#5e5e5e"/></svg><span class="t" style="left:43px;top:350px;color:#000">[SEQ/ACK analysis]</span><svg class="a" style="left:25.5px;top:352px" width="8" height="10"><path d="M2 1L6.300 5 2 9z" fill="#5e5e5e"/></svg><span class="t" style="left:43px;top:364px;color:#000">TCP payload (1866 bytes)</span><div class="t" style="left:20px;top:378px;width:968px;background:#7eb3ef"></div><span class="t" style="left:23px;top:378px;color:#000">Transport Layer Security</span><svg class="a" style="left:6px;top:380px" width="8" height="10"><path d="M2 1L6.300 5 2 9z" fill="#5e5e5e"/></svg></div><div class="a" style="left:1px;top:1041px;width:987px;height:14px;background:#e0e0e0;border-top:1px solid #c4c4c4;box-sizing:border-box"></div><div class="btn" style="left:1px;top:1042px;width:13px;height:13px;border-color:#d0d0d0"></div><svg class="a" style="left:1px;top:1042px" width="13" height="13"><path d="M8.300 2.800L4.300 6.500 8.300 10.200z" fill="#4a4a4a"/></svg><div class="btn" style="left:14px;top:1042px;width:772px;height:13px;background:linear-gradient(#fff,#f1f1f1)"></div><div class="btn" style="left:974px;top:1042px;width:13px;height:13px;border-color:#d0d0d0"></div><svg class="a" style="left:974px;top:1042px" width="13" height="13"><path d="M4.700 2.800L8.700 6.500 4.700 10.200z" fill="#4a4a4a"/></svg><div class="a" style="left:991px;top:804px;width:1px;height:17px;background:repeating-linear-gradient(#bdbdbd 0 1px,transparent 1px 3px)"></div><div class="a" style="left:993px;top:566px;width:925px;height:490px;box-sizing:border-box;border:1px solid #bcbcbc;border-right:none;background:#fff"></div><div class="a" style="left:994px;top:567px;width:43px;height:488px;background:#efefef"></div><div class="a mono" style="left:994px;top:567px;width:909px;height:488px;overflow:hidden"><span class="t" style="left:7.5px;top:0px;color:#a6a6a6">0010</span><span class="t" style="left:50.5px;top:0px">0a 65 6f 01 96 da 01 bb  e0 77 65 74 67 48 20 70</span><span class="t" style="left:416.7px;top:0px"><b>·</b>eo<b>·····</b> <b>·</b>wetgH p</span><span class="t" style="left:7.5px;top:14px;color:#a6a6a6">0020</span><span class="t" style="left:50.5px;top:14px">80 18 01 fb fa 42 00 00  01 01 08 0a 1a d9 5d a2</span><span class="t" style="left:416.7px;top:14px"><b>·····</b>B<b>··</b> <b>······</b>]<b>·</b></span><span class="t" style="left:7.5px;top:28px;color:#a6a6a6">0030</span><span class="t" style="left:50.5px;top:28px">34 78 a3 ff 16 03 01 07  45 01 00 07 41 03 03 78</span><span class="t" style="left:416.7px;top:28px">4x<b>······</b> E<b>···</b>A<b>··</b>x</span><span class="t" style="left:7.5px;top:42px;color:#a6a6a6">0040</span><span class="t" style="left:50.5px;top:42px">6b 7a 94 20 5e b5 fa 5c  c2 da b1 fc d5 69 df d6</span><span class="t" style="left:416.7px;top:42px">kz<b>·</b> ^<b>··</b>\ <b>·····</b>i<b>··</b></span><span class="t" style="left:7.5px;top:56px;color:#a6a6a6">0050</span><span class="t" style="left:50.5px;top:56px">3a 70 aa f4 dc a1 c7 b9  bb ed 0d 4c ae 26 8e 20</span><span class="t" style="left:416.7px;top:56px">:p<b>······</b> <b>···</b>L<b>·</b>&amp;<b>·</b> </span><span class="t" style="left:7.5px;top:70px;color:#a6a6a6">0060</span><span class="t" style="left:50.5px;top:70px">d2 3d b7 4b 6b c9 7e 78  d4 96 70 21 1d f2 5b 3a</span><span class="t" style="left:416.7px;top:70px"><b>·</b>=<b>·</b>Kk<b>·</b>~x <b>··</b>p!<b>··</b>[:</span><span class="t" style="left:7.5px;top:84px;color:#a6a6a6">0070</span><span class="t" style="left:50.5px;top:84px">10 4a ba 64 58 34 d5 9c  55 10 fd 0a 56 04 2a b8</span><span class="t" style="left:416.7px;top:84px"><b>·</b>J<b>·</b>dX4<b>··</b> U<b>···</b>V<b>·</b>*<b>·</b></span><span class="t" style="left:7.5px;top:98px;color:#a6a6a6">0080</span><span class="t" style="left:50.5px;top:98px">00 06 13 01 13 03 13 02  01 00 06 f2 00 00 00 16</span><span class="t" style="left:416.7px;top:98px"><b>········</b> <b>········</b></span><span class="t" style="left:7.5px;top:112px;color:#a6a6a6">0090</span><span class="t" style="left:50.5px;top:112px">00 14 00 00 11 62 69 74  77 61 72 64 65 6e 2e 65</span><span class="t" style="left:416.7px;top:112px"><b>·····</b>bit warden.e</span><span class="t" style="left:7.5px;top:126px;color:#a6a6a6">00a0</span><span class="t" style="left:50.5px;top:126px">6b 7a 79 2e 69 73 00 17  00 00 ff 01 00 01 00 00</span><span class="t" style="left:416.7px;top:126px">kzy.is<b>··</b> <b>········</b></span><span class="t" style="left:7.5px;top:140px;color:#a6a6a6">00b0</span><span class="t" style="left:50.5px;top:140px">0a 00 10 00 0e 11 ec 00  1d 00 17 00 18 00 19 01</span><span class="t" style="left:416.7px;top:140px"><b>········</b> <b>········</b></span><span class="t" style="left:7.5px;top:154px;color:#a6a6a6">00c0</span><span class="t" style="left:50.5px;top:154px">00 01 01 00 23 00 00 00  10 00 0e 00 0c 02 68 32</span><span class="t" style="left:416.7px;top:154px"><b>····</b>#<b>···</b> <b>······</b>h2</span><span class="t" style="left:7.5px;top:168px;color:#a6a6a6">00d0</span><span class="t" style="left:50.5px;top:168px">08 68 74 74 70 2f 31 2e  31 00 05 00 05 01 00 00</span><span class="t" style="left:416.7px;top:168px"><b>·</b>ht<span></span>tp/1. 1<b>·······</b></span><span class="t" style="left:7.5px;top:182px;color:#222">00e0</span><div class="t" style="left:50px;top:182px;width:36.6px;background:#308cc6"></div><div class="t" style="left:416px;top:182px;width:16px;background:#308cc6"></div><span class="t" style="left:50.5px;top:182px"><span style="color:#fff">00 00</span> 00 22 00 0a 00 08  04 03 05 03 06 03 02 03</span><span class="t" style="left:416.7px;top:182px"><span style="color:#fff">··</span><b>·</b>&quot;<b>····</b> <b>········</b></span><span class="t" style="left:7.5px;top:196px;color:#a6a6a6">00f0</span><span class="t" style="left:50.5px;top:196px">00 12 00 00 00 33 05 2f  05 2d 11 ec 04 c0 c9 11</span><span class="t" style="left:416.7px;top:196px"><b>·····</b>3<b>·</b>/ <b>·</b>-<b>······</b></span><span class="t" style="left:7.5px;top:210px;color:#a6a6a6">0100</span><span class="t" style="left:50.5px;top:210px">1d 50 29 cf b0 5c 2d a2  4b ca c6 0c bd 72 eb 3d</span><span class="t" style="left:416.7px;top:210px"><b>·</b>P)<b>··</b>\-<b>·</b> K<b>····</b>r<b>·</b>=</span><span class="t" style="left:7.5px;top:224px;color:#a6a6a6">0110</span><span class="t" style="left:50.5px;top:224px">62 d8 09 5e 55 16 da 0a  54 8a 13 24 a7 46 a9 36</span><span class="t" style="left:416.7px;top:224px">b<b>··</b>^U<b>···</b> T<b>··</b>$<b>·</b>F<b>·</b>6</span><span class="t" style="left:7.5px;top:238px;color:#a6a6a6">0120</span><span class="t" style="left:50.5px;top:238px">f9 16 1c 80 16 bc 93 cd  55 67 40 5c d0 6c d6 c1</span><span class="t" style="left:416.7px;top:238px"><b>········</b> Ug@\<b>·</b>l<b>··</b></span><span class="t" style="left:7.5px;top:252px;color:#a6a6a6">0130</span><span class="t" style="left:50.5px;top:252px">9e a8 69 19 de 28 70 e1  02 88 41 22 aa 9a 43 21</span><span class="t" style="left:416.7px;top:252px"><b>··</b>i<b>··</b>(p<b>·</b> <b>··</b>A&quot;<b>··</b>C!</span><span class="t" style="left:7.5px;top:266px;color:#a6a6a6">0140</span><span class="t" style="left:50.5px;top:266px">0c f7 22 dc 92 b1 9b da  2d e2 b3 af 90 ea b2 87</span><span class="t" style="left:416.7px;top:266px"><b>··</b>&quot;<b>·····</b> -<b>·······</b></span><span class="t" style="left:7.5px;top:280px;color:#a6a6a6">0150</span><span class="t" style="left:50.5px;top:280px">72 0b e1 02 a9 ce 00 70  62 b4 6d 70 cc ce 5a 16</span><span class="t" style="left:416.7px;top:280px">r<b>······</b>p b<b>·</b>mp<b>··</b>Z<b>·</b></span><span class="t" style="left:7.5px;top:294px;color:#a6a6a6">0160</span><span class="t" style="left:50.5px;top:294px">5b fe 85 8f 71 b9 96 da  a4 66 fc 45 91 1d 76 1a</span><span class="t" style="left:416.7px;top:294px">[<b>···</b>q<b>···</b> <b>·</b>f<b>·</b>E<b>··</b>v<b>·</b></span><span class="t" style="left:7.5px;top:308px;color:#a6a6a6">0170</span><span class="t" style="left:50.5px;top:308px">0e 45 0b bd 05 1f fb 0c  c6 dd 32 64 72 d4 97 73</span><span class="t" style="left:416.7px;top:308px"><b>·</b>E<b>······</b> <b>··</b>2dr<b>··</b>s</span><span class="t" style="left:7.5px;top:322px;color:#a6a6a6">0180</span><span class="t" style="left:50.5px;top:322px">3c 7c 91 64 6c c9 56 c1  2a 74 76 e2 f4 07 a7 a3</span><span class="t" style="left:416.7px;top:322px">&lt;|<b>·</b>dl<b>·</b>V<b>·</b> *tv<b>·····</b></span><span class="t" style="left:7.5px;top:336px;color:#a6a6a6">0190</span><span class="t" style="left:50.5px;top:336px">c1 2e fc 80 db 4b 3f 35  52 0c 4b 45 18 62 89 b3</span><span class="t" style="left:416.7px;top:336px"><b>·</b>.<b>···</b>K?5 R<b>·</b>KE<b>·</b>b<b>··</b></span><span class="t" style="left:7.5px;top:350px;color:#a6a6a6">01a0</span><span class="t" style="left:50.5px;top:350px">1f 64 49 88 f6 b1 ef b6  10 8d 42 06 87 09 b1 6f</span><span class="t" style="left:416.7px;top:350px"><b>·</b>dI<b>·····</b> <b>··</b>B<b>····</b>o</span><span class="t" style="left:7.5px;top:364px;color:#a6a6a6">01b0</span><span class="t" style="left:50.5px;top:364px">35 74 ae d0 0c 3f 26 86  a3 cc 6f 2a 39 04 c1 d9</span><span class="t" style="left:416.7px;top:364px">5t<b>···</b>?&amp;<b>·</b> <b>··</b>o*9<b>···</b></span><span class="t" style="left:7.5px;top:378px;color:#a6a6a6">01c0</span><span class="t" style="left:50.5px;top:378px">b6 dc b3 9e b0 bb c9 1f  a1 bb f3 ec 9b 4f e8 96</span><span class="t" style="left:416.7px;top:378px"><b>········</b> <b>·····</b>O<b>··</b></span><span class="t" style="left:7.5px;top:392px;color:#a6a6a6">01d0</span><span class="t" style="left:50.5px;top:392px">46 28 0b 4e c4 50 a0 f8  1d d0 55 53 b8 36 17 64</span><span class="t" style="left:416.7px;top:392px">F(<b>·</b>N<b>·</b>P<b>··</b> <b>··</b>US<b>·</b>6<b>·</b>d</span><span class="t" style="left:7.5px;top:406px;color:#a6a6a6">01e0</span><span class="t" style="left:50.5px;top:406px">e7 b4 db 19 a7 06 9c 30  de 25 74 d8 68 9a 00 69</span><span class="t" style="left:416.7px;top:406px"><b>·······</b>0 <b>·</b>%t<b>·</b>h<b>··</b>i</span><span class="t" style="left:7.5px;top:420px;color:#a6a6a6">01f0</span><span class="t" style="left:50.5px;top:420px">bf 00 c1 14 14 e2 29 4e  dc 86 91 41 9e 34 db 3f</span><span class="t" style="left:416.7px;top:420px"><b>······</b>)N <b>···</b>A<b>·</b>4<b>·</b>?</span><span class="t" style="left:7.5px;top:434px;color:#a6a6a6">0200</span><span class="t" style="left:50.5px;top:434px">6d 17 64 a8 2b 6b 2f 20  3d a6 fc 23 b4 7b 3c 36</span><span class="t" style="left:416.7px;top:434px">m<b>·</b>d<b>·</b>+k/  =<b>··</b>#<b>·</b>{&lt;6</span><span class="t" style="left:7.5px;top:448px;color:#a6a6a6">0210</span><span class="t" style="left:50.5px;top:448px">91 96 24 47 ce d9 f2 40  46 8a a1 70 d2 a7 21 e1</span><span class="t" style="left:416.7px;top:448px"><b>··</b>$G<b>···</b>@ F<b>··</b>p<b>··</b>!<b>·</b></span><span class="t" style="left:7.5px;top:462px;color:#a6a6a6">0220</span><span class="t" style="left:50.5px;top:462px">3c 13 c3 24 5e 7a b5 83  ab 35 21 04 96 13 00 b1</span><span class="t" style="left:416.7px;top:462px">&lt;<b>··</b>$^z<b>··</b> <b>·</b>5!<b>·····</b></span></div><div class="sb" style="left:1903px;top:567px;width:14px;height:488px"></div><div class="btn" style="left:1904px;top:567.5px;width:13px;height:13px;border-color:#d6d6d6"></div><svg class="a" style="left:1904px;top:567.5px" width="13" height="13"><path d="M2.800 8.800L6.500 4.700 10.200 8.800z" fill="#4a4a4a"/></svg><div class="btn" style="left:1904px;top:585.500px;width:13px;height:48px;background:linear-gradient(90deg,#fff,#f1f1f1)"></div><div class="btn" style="left:1904px;top:1041.5px;width:13px;height:13px;border-color:#d6d6d6"></div><svg class="a" style="left:1904px;top:1041.5px" width="13" height="13"><path d="M2.800 4.700L6.500 8.800 10.200 4.700z" fill="#4a4a4a"/></svg><div class="a" style="left:0;top:1056px;width:1918px;height:22px;background:#efefef"></div><svg class="a" style="left:8px;top:1059px" width="40" height="17" viewBox="0 0 40 17"><circle cx="8.700" cy="8.300" r="6.300" fill="#d9d96c" stroke="#77773a" stroke-width="1"/><rect x="26" y="2.500" width="10" height="11.500" fill="#fbfbfb" stroke="#c9c9c9" stroke-width=".8"/><path d="M27.500 5.500h7M27.500 7.500h7M27.500 9.500h5" stroke="#c2cbd6" stroke-width=".8"/><rect x="26" y="2.200" width="10" height="1.600" fill="#5f87b5"/><path d="M31 10.500L37.500 3l1.400 1.200L32.500 11.600 30.500 12.300z" fill="#3d3d3d"/></svg><span class="a" id="st1" style="left:61.5px;top:1059px;height:18px;line-height:18px;font-size:12.4px;white-space:pre;letter-spacing:.42px;color:#111;-webkit-text-stroke:.2px #111">TCP Segment Len (tcp.len)</span><span class="a" id="st2" style="left:1274.5px;top:1059px;height:18px;line-height:18px;font-size:12.4px;white-space:pre;letter-spacing:.42px;color:#111;-webkit-text-stroke:.2px #111">Packets: 526</span><span class="a" id="st3" style="left:1801px;top:1059px;height:18px;line-height:18px;font-size:12.4px;white-space:pre;letter-spacing:.42px;color:#111;-webkit-text-stroke:.2px #111">Profile: Default</span><div class="a" style="left:1262px;top:1059px;width:1px;height:16px;background:repeating-linear-gradient(#c4c4c4 0 1px,transparent 1px 3px)"></div><div class="a" style="left:1788px;top:1059px;width:1px;height:16px;background:repeating-linear-gradient(#c4c4c4 0 1px,transparent 1px 3px)"></div><svg class="a" style="left:1904px;top:1064px" width="13" height="13"><g fill="#c0c0c0"><rect x="10" y="2" width="1.500" height="1.500"/><rect x="7" y="5" width="1.500" height="1.500"/><rect x="10" y="5" width="1.500" height="1.500"/><rect x="4" y="8" width="1.500" height="1.500"/><rect x="7" y="8" width="1.500" height="1.500"/><rect x="10" y="8" width="1.500" height="1.500"/><rect x="1" y="11" width="1.500" height="1.500"/><rect x="4" y="11" width="1.500" height="1.500"/><rect x="7" y="11" width="1.500" height="1.500"/><rect x="10" y="11" width="1.500" height="1.500"/></g></svg><svg class="a" style="left:0;top:0;pointer-events:none" width="1918" height="700" viewBox="0 0 1918 700" fill="none" stroke="#f01414" stroke-linecap="round" stroke-linejoin="round"><path d="M1399.500 178.400C1404 178.400 1410.500 179.500 1410.500 186V216.500L1418.500 222.200H1427.200L1419 223.800 1406 233.800 1405.700 281.500C1405.700 287 1399 289.500 1391.800 291.600" stroke-width="3.400"/><path d="M585.300 628.200C585.500 619 586.800 609 588.700 603C590 599.500 592 598.400 594.500 598.300C606 597.600 640 597.400 654 598.300L671.800 600.300C670.500 607 666.800 615.500 663.200 621.300C661.400 624.300 659 626.800 656.300 628.200C651 631 644 633.500 638 633.900H606C598 633 590.500 631 585.300 628.200Z" stroke="#f40c0c" stroke-width="3.100"/><ellipse cx="802.3" cy="643.6" rx="2.3" ry="7.6" fill="#f80808" stroke="none"/><ellipse cx="831.5" cy="643.6" rx="2.3" ry="7.6" fill="#f80808" stroke="none"/><path d="M675.300 636.300L694.400 645.900 675.300 655.500" stroke="#f80808" stroke-width="3.700" stroke-linecap="butt" stroke-linejoin="miter"/></svg><span class="ann" style="left:1295.200px;width:600px;text-align:center;top:172.74px;font-size:27.2px;line-height:32px;height:32px;color:#f01414;-webkit-text-stroke:0.8px #f01414;transform:scaleX(0.858);transform-origin:50% 0">retransmission of</span><span class="ann" style="left:1295.200px;width:600px;text-align:center;top:201.84px;font-size:27.2px;line-height:32px;height:32px;color:#f01414;-webkit-text-stroke:0.8px #f01414;transform:scaleX(0.858);transform-origin:50% 0">TCP packets because</span><span class="ann" style="left:1295.200px;width:600px;text-align:center;top:230.94px;font-size:27.2px;line-height:32px;height:32px;color:#f01414;-webkit-text-stroke:0.8px #f01414;transform:scaleX(0.858);transform-origin:50% 0">server did not</span><span class="ann" style="left:1295.200px;width:600px;text-align:center;top:260.04px;font-size:27.2px;line-height:32px;height:32px;color:#f01414;-webkit-text-stroke:0.8px #f01414;transform:scaleX(0.858);transform-origin:50% 0">acknowledge them</span><span class="ann" id="mtu" style="left:671px;top:617.97px;font-size:51.8px;line-height:60px;height:60px;color:#f80808;-webkit-text-stroke:.7px #f80808;transform:scaleX(0.9385);transform-origin:0 0">  1500 MTU</span></div></body></html>
